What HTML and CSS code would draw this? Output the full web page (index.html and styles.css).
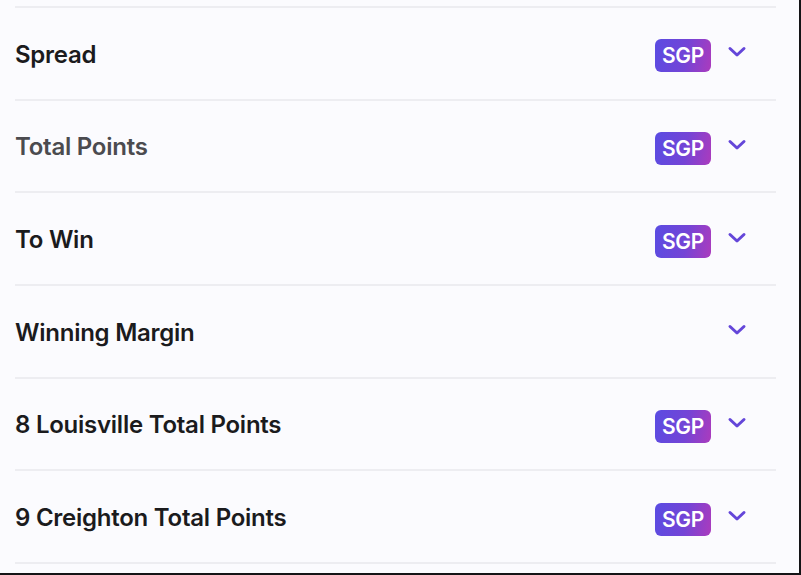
FILE: index.html
```html
<!DOCTYPE html>
<html>
<head>
<meta charset="utf-8">
<link rel="stylesheet" href="styles.css">
</head>
<body>
<div class="frame">
  <ul class="markets">
    <li class="market"><span class="name">Spread</span><span class="actions"><span class="sgp">SGP</span><svg class="chev" viewBox="0 0 20 12"><path d="M3 2.5 L10 9 L17 2.5"/></svg></span></li>
    <li class="market"><span class="name muted">Total Points</span><span class="actions"><span class="sgp">SGP</span><svg class="chev" viewBox="0 0 20 12"><path d="M3 2.5 L10 9 L17 2.5"/></svg></span></li>
    <li class="market"><span class="name">To Win</span><span class="actions"><span class="sgp">SGP</span><svg class="chev" viewBox="0 0 20 12"><path d="M3 2.5 L10 9 L17 2.5"/></svg></span></li>
    <li class="market"><span class="name">Winning Margin</span><span class="actions"><svg class="chev" viewBox="0 0 20 12"><path d="M3 2.5 L10 9 L17 2.5"/></svg></span></li>
    <li class="market"><span class="name">8 Louisville Total Points</span><span class="actions"><span class="sgp">SGP</span><svg class="chev" viewBox="0 0 20 12"><path d="M3 2.5 L10 9 L17 2.5"/></svg></span></li>
    <li class="market"><span class="name">9 Creighton Total Points</span><span class="actions"><span class="sgp">SGP</span><svg class="chev" viewBox="0 0 20 12"><path d="M3 2.5 L10 9 L17 2.5"/></svg></span></li>
  </ul>
</div>
</body>
</html>
```
FILE: styles.css
```css
html, body {
  margin: 0;
  padding: 0;
  background: #fbfbfe;
}
.frame {
  width: 799px;
  height: 573px;
  border-right: 2px solid #141416;
  border-bottom: 2px solid #141416;
  overflow: hidden;
  font-family: Inter, "Noto Sans", sans-serif;
}
.markets {
  list-style: none;
  margin: 0;
  padding: 6px 23px 0 15px;
}
.markets .market:first-child {
  border-top: 2px solid #ededf1;
}
.market {
  height: 90.65px;
  border-bottom: 2px solid #ededf1;
  display: flex;
  align-items: center;
  justify-content: space-between;
}
.name {
  font-size: 24px;
  font-weight: 600;
  color: #1b1b1d;
  letter-spacing: -0.25px;
  margin-top: 2px;
}
.name.muted {
  color: #4b4b4f;
}
.actions {
  display: flex;
  align-items: center;
  padding-right: 29px;
}
.sgp {
  width: 56px;
  height: 33px;
  border-radius: 6px;
  background: linear-gradient(100deg, #5a4ce2 0%, #7444d6 55%, #ab3bbd 100%);
  color: #ffffff;
  font-size: 21px;
  font-weight: 600;
  letter-spacing: -0.3px;
  display: flex;
  align-items: center;
  justify-content: center;
  margin-right: 16px;
  margin-top: 5px;
}
.chev {
  width: 20px;
  height: 12px;
  margin-top: -2px;
}
.chev path {
  fill: none;
  stroke: #6446d9;
  stroke-width: 3;
  stroke-linecap: round;
  stroke-linejoin: round;
}
```
